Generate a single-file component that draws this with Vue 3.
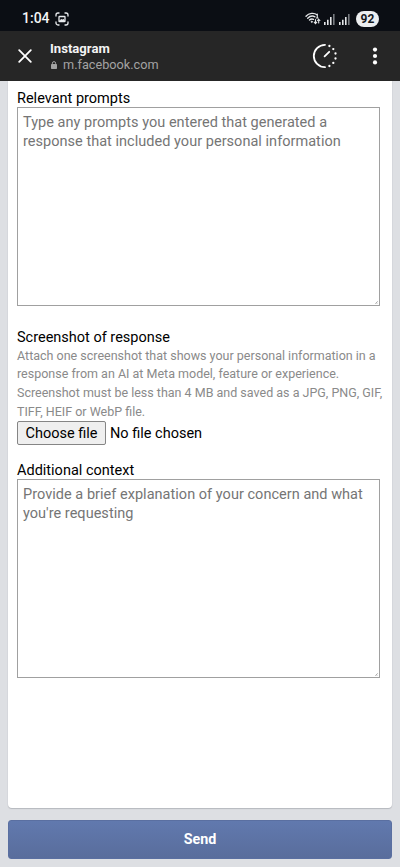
<script setup>
import { ref } from 'vue'

const prompts = ref('')
const context = ref('')
</script>

<template>
  <div class="screen">
    <header class="status">
      <div class="status-left">
        <span class="clock">1:04</span>
        <svg class="capture" width="14" height="14" viewBox="0 0 14 14" fill="none" stroke="#e8eaed" stroke-width="1.3" stroke-linecap="round">
          <path d="M1 4V3a2 2 0 0 1 2-2h1M10 1h1a2 2 0 0 1 2 2v1M13 10v1a2 2 0 0 1-2 2h-1M4 13H3a2 2 0 0 1-2-2v-1" />
          <rect x="4" y="4.5" width="6" height="5" rx=".6" />
          <path d="M4.5 9l1.7-1.7 1.1.8 1-1L9.6 9z" fill="#e8eaed" stroke-width=".7" />
        </svg>
      </div>
      <div class="status-right">
        <svg class="wifi" width="16" height="13" viewBox="0 0 16 13" fill="none" stroke="#e4e6e8" stroke-width="1.35" stroke-linecap="round">
          <path d="M1 4.2C4 .9 9 .5 12 2.7M2.7 6.2C5 3.9 7.8 3.6 10 4.8M4.5 8.1C5.9 6.8 7.2 6.7 8.5 7.4" />
          <circle cx="6.7" cy="9.8" r=".7" fill="#e4e6e8" stroke-width=".6" />
          <path d="M12.3 2v3.5M11.3 6h1.8M10.5 7.5v4M9.2 10.2l1.3 1.4 1.3-1.4M13.7 11V7.2M12.5 8.5l1.2-1.3 1.2 1.3" stroke-width="1.1" />
        </svg>
        <svg v-for="n in 2" :key="n" width="11" height="12" viewBox="0 0 11 12">
          <path d="M0 9h1.6v3H0zM3 6.8h1.6V12H3zM6 4h1.6v8H6z" fill="#e4e6e8" />
          <path d="M9 1h1.6v11H9z" fill="#777b80" />
        </svg>
        <span class="battery">92</span>
      </div>
    </header>

    <nav class="toolbar">
      <svg class="close" width="14" height="14" viewBox="0 0 14 14" fill="none" stroke="#fff" stroke-width="1.8" stroke-linecap="round">
        <path d="M1.2 1.2l11.6 11.6M12.8 1.2L1.2 12.8" />
      </svg>
      <div class="site">
        <div class="site-name">Instagram</div>
        <div class="site-url">
          <svg width="6" height="8" viewBox="0 0 6 8">
            <path d="M1.4 3.5V2.2a1.6 1.6 0 0 1 3.2 0v1.3" fill="none" stroke="#a3a3a3" stroke-width="1" />
            <rect y="3" width="6" height="5" rx=".7" fill="#a3a3a3" />
          </svg>
          <span>m.facebook.com</span>
        </div>
      </div>
      <svg class="timer" width="26" height="26" viewBox="0 0 26 26" fill="none" stroke="#fff" stroke-linecap="round">
        <path d="M13 1.8a11.2 11.2 0 0 0 0 22.4" stroke-width="1.8" />
        <path d="M12.6 13.4l4.6-4.6" stroke-width="1.8" />
        <g fill="#fff" stroke="none">
          <circle cx="17.4" cy="3" r="1.15" />
          <circle cx="21.3" cy="6.1" r="1.15" />
          <circle cx="23.5" cy="10.5" r="1.15" />
          <circle cx="23.5" cy="15.5" r="1.15" />
          <circle cx="21.3" cy="19.9" r="1.15" />
          <circle cx="17.4" cy="23" r="1.15" />
        </g>
      </svg>
      <svg class="more" width="6" height="18" viewBox="0 0 6 18" fill="#fff">
        <circle cx="3" cy="2.6" r="2.1" />
        <circle cx="3" cy="9" r="2.1" />
        <circle cx="3" cy="15.4" r="2.1" />
      </svg>
    </nav>

    <main class="page">
      <form class="form" @submit.prevent>
        <section class="card">
          <label class="label" for="prompts">Relevant prompts</label>
          <div class="field">
            <textarea id="prompts" v-model="prompts" placeholder="Type any prompts you entered that generated a response that included your personal information"></textarea>
            <svg class="grip" width="3" height="3" viewBox="0 0 3 3" stroke="#888" stroke-width=".7"><path d="M.3 2.7l2.4-2.4M1.8 2.7l.9-.9" /></svg>
          </div>

          <div class="label second">Screenshot of response</div>
          <p class="help">
            Attach one screenshot that shows your personal information in a<br />
            response from an AI at Meta model, feature or experience.<br />
            Screenshot must be less than 4 MB and saved as a JPG, PNG, GIF,<br />
            TIFF, HEIF or WebP file.
          </p>
          <div class="file">
            <button type="button" class="choose">Choose file</button>
            <span>No file chosen</span>
          </div>

          <label class="label third" for="context">Additional context</label>
          <div class="field">
            <textarea id="context" v-model="context" placeholder="Provide a brief explanation of your concern and what you're requesting"></textarea>
            <svg class="grip" width="3" height="3" viewBox="0 0 3 3" stroke="#888" stroke-width=".7"><path d="M.3 2.7l2.4-2.4M1.8 2.7l.9-.9" /></svg>
          </div>
        </section>
        <button type="submit" class="send">Send</button>
      </form>
    </main>
  </div>
</template>

<style>
body {
  margin: 0;
}
</style>

<style scoped>
.screen {
  width: 400px;
  height: 867px;
  display: flex;
  flex-direction: column;
  overflow: hidden;
  background: #dddfe3;
  font-family: Roboto, "Liberation Sans", sans-serif;
  color: #111;
}
.screen *,
.screen {
  box-sizing: border-box;
}
svg {
  display: block;
  flex: none;
}
.status {
  height: 31px;
  flex: none;
  display: flex;
  justify-content: space-between;
  padding: 10px 21px 0 22px;
  background: #0b0e14;
}
.status-left {
  display: flex;
  height: 17px;
  align-items: center;
}
.clock {
  width: 33px;
  color: #f4f5f6;
  font-size: 14px;
  font-weight: 500;
  line-height: 17px;
  white-space: nowrap;
}
.status-right {
  display: flex;
  height: 17px;
  align-items: center;
  gap: 4px;
}
.wifi {
  margin-right: -1px;
}
.battery {
  width: 23px;
  height: 16px;
  margin-left: 2px;
  border-radius: 8px;
  background: #eceef0;
  color: #15181d;
  font-size: 12px;
  font-weight: 700;
  line-height: 16px;
  text-align: center;
}
.toolbar {
  height: 50px;
  flex: none;
  display: flex;
  align-items: center;
  padding: 0 22px 0 18px;
  background: #262626;
}
.site {
  margin-left: 18px;
  flex: 1;
}
.site-name {
  padding-top: 1px;
  color: #f4f4f4;
  font-size: 13.1px;
  font-weight: 700;
  line-height: 16px;
}
.site-url {
  display: flex;
  align-items: center;
  gap: 6px;
  padding-left: 1px;
  color: #a3a3a3;
  font-size: 12.7px;
  line-height: 16px;
}
.more {
  margin-left: 34px;
}
.page {
  flex: 1;
  padding: 0 8px;
  overflow: hidden;
}
.card {
  height: 727px;
  padding: 8px 12px 0 9px;
  background: #fff;
  border-radius: 0 0 4px 4px;
  box-shadow: 0 1px 1px #b5b8be, 0 0 1px #b5b8be;
}
.label {
  display: block;
  height: 18px;
  color: #000;
  font-size: 14.5px;
  line-height: 20px;
}
.field {
  position: relative;
  height: 199px;
}
textarea {
  display: block;
  width: 363px;
  height: 199px;
  margin: 0;
  padding: 5px;
  border: 1px solid #a0a0a0;
  border-radius: 0;
  outline: none;
  resize: none;
  background: #fff;
  color: #111;
  font: 14.5px/19px Roboto, "Liberation Sans", sans-serif;
  letter-spacing: 0.03px;
}
textarea::placeholder {
  color: #757575;
  opacity: 1;
}
.grip {
  position: absolute;
  right: 2px;
  bottom: 2px;
}
.second {
  margin-top: 22px;
}
.help {
  height: 75px;
  margin: 0;
  padding-top: 0.5px;
  color: #8a8a8a;
  font-size: 12.5px;
  line-height: 18.75px;
  white-space: nowrap;
}
.file {
  display: flex;
  align-items: center;
  height: 24px;
  gap: 4px;
  color: #000;
  font-size: 14.5px;
  white-space: nowrap;
}
.choose {
  width: 89px;
  height: 24px;
  padding: 1px 0 0;
  border: 1px solid #858585;
  border-radius: 2px;
  background: #efefef;
  color: #000;
  font: 14.5px/21px Roboto, "Liberation Sans", sans-serif;
}
.third {
  margin-top: 16px;
}
.send {
  display: block;
  width: 384px;
  height: 39px;
  margin: 12px 0 0;
  padding: 0;
  border: 1px solid #5a6fa1;
  border-radius: 3px;
  background: linear-gradient(#6179ae, #596d9c);
  color: #fff;
  font: 700 14.3px/37px Roboto, "Liberation Sans", sans-serif;
}
</style>
